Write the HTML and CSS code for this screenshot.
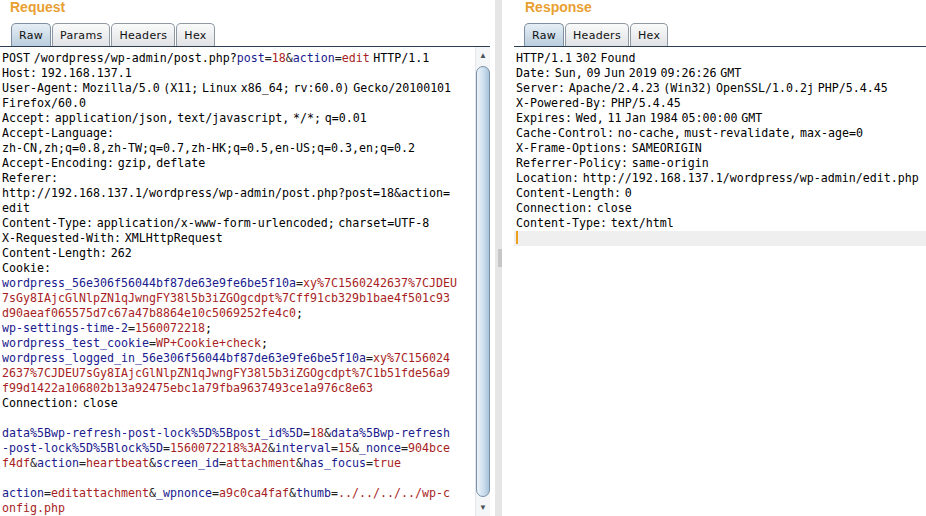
FILE: index.html
```html
<!DOCTYPE html>
<html>
<head>
	<title>Repeater</title>
	<link rel="stylesheet" href="styles.css">
</head>
<body>
	<div class="panes">
		<!-- 请求 -->
		<div class="pane pane-req">
			<div class="pane-title">Request</div>
			<ul class="tabs">
				<li class="tab active">Raw</li>
				<li class="tab">Params</li>
				<li class="tab">Headers</li>
				<li class="tab">Hex</li>
			</ul>
			<div class="editor">
				<div class="text">
					<div class="ln">POST /wordpress/wp-admin/post.php?<span class="k">post</span><span class="d">=</span><span class="v">18</span><span class="d">&amp;</span><span class="k">action</span><span class="d">=</span><span class="v">edit</span> HTTP/1.1</div>
					<div class="ln">Host: 192.168.137.1</div>
					<div class="ln">User-Agent: Mozilla/5.0 (X11; Linux x86_64; rv:60.0) Gecko/20100101</div>
					<div class="ln">Firefox/60.0</div>
					<div class="ln">Accept: application/json, text/javascript, */*; q=0.01</div>
					<div class="ln">Accept-Language:</div>
					<div class="ln">zh-CN,zh;q=0.8,zh-TW;q=0.7,zh-HK;q=0.5,en-US;q=0.3,en;q=0.2</div>
					<div class="ln">Accept-Encoding: gzip, deflate</div>
					<div class="ln">Referer:</div>
					<div class="ln">http://192.168.137.1/wordpress/wp-admin/post.php?post=18&amp;action=</div>
					<div class="ln">edit</div>
					<div class="ln">Content-Type: application/x-www-form-urlencoded; charset=UTF-8</div>
					<div class="ln">X-Requested-With: XMLHttpRequest</div>
					<div class="ln">Content-Length: 262</div>
					<div class="ln">Cookie:</div>
					<div class="ln"><span class="k">wordpress_56e306f56044bf87de63e9fe6be5f10a</span><span class="d">=</span><span class="v">xy%7C1560242637%7CJDEU</span></div>
					<div class="ln"><span class="v">7sGy8IAjcGlNlpZN1qJwngFY38l5b3iZGOgcdpt%7Cff91cb329b1bae4f501c93</span></div>
					<div class="ln"><span class="v">d90aeaf065575d7c67a47b8864e10c5069252fe4c0</span>;</div>
					<div class="ln"><span class="k">wp-settings-time-2</span><span class="d">=</span><span class="v">1560072218</span>;</div>
					<div class="ln"><span class="k">wordpress_test_cookie</span><span class="d">=</span><span class="v">WP+Cookie+check</span>;</div>
					<div class="ln"><span class="k">wordpress_logged_in_56e306f56044bf87de63e9fe6be5f10a</span><span class="d">=</span><span class="v">xy%7C156024</span></div>
					<div class="ln"><span class="v">2637%7CJDEU7sGy8IAjcGlNlpZN1qJwngFY38l5b3iZGOgcdpt%7C1b51fde56a9</span></div>
					<div class="ln"><span class="v">f99d1422a106802b13a92475ebc1a79fba9637493ce1a976c8e63</span></div>
					<div class="ln">Connection: close</div>
					<div class="ln">&nbsp;</div>
					<div class="ln"><span class="k">data%5Bwp-refresh-post-lock%5D%5Bpost_id%5D</span><span class="d">=</span><span class="v">18</span><span class="d">&amp;</span><span class="k">data%5Bwp-refresh</span></div>
					<div class="ln"><span class="k">-post-lock%5D%5Block%5D</span><span class="d">=</span><span class="v">1560072218%3A2</span><span class="d">&amp;</span><span class="k">interval</span><span class="d">=</span><span class="v">15</span><span class="d">&amp;</span><span class="k">_nonce</span><span class="d">=</span><span class="v">904bce</span></div>
					<div class="ln"><span class="v">f4df</span><span class="d">&amp;</span><span class="k">action</span><span class="d">=</span><span class="v">heartbeat</span><span class="d">&amp;</span><span class="k">screen_id</span><span class="d">=</span><span class="v">attachment</span><span class="d">&amp;</span><span class="k">has_focus</span><span class="d">=</span><span class="v">true</span></div>
					<div class="ln">&nbsp;</div>
					<div class="ln"><span class="k">action</span><span class="d">=</span><span class="v">editattachment</span><span class="d">&amp;</span><span class="k">_wpnonce</span><span class="d">=</span><span class="v">a9c0ca4faf</span><span class="d">&amp;</span><span class="k">thumb</span><span class="d">=</span><span class="v">../../../../wp-c</span></div>
					<div class="ln"><span class="v">onfig.php</span></div>
				</div>
				<div class="scrollbar">
					<div class="sb-btn">&#9650;</div>
					<div class="sb-track"><div class="sb-thumb"></div></div>
					<div class="sb-btn">&#9660;</div>
				</div>
			</div>
		</div>

		<!-- 分隔条 -->
		<div class="splitter"><div class="grip"></div></div>

		<!-- 响应 -->
		<div class="pane pane-res">
			<div class="pane-title">Response</div>
			<ul class="tabs">
				<li class="tab active">Raw</li>
				<li class="tab">Headers</li>
				<li class="tab">Hex</li>
			</ul>
			<div class="editor">
				<div class="text">
					<div class="ln">HTTP/1.1 302 Found</div>
					<div class="ln">Date: Sun, 09 Jun 2019 09:26:26 GMT</div>
					<div class="ln">Server: Apache/2.4.23 (Win32) OpenSSL/1.0.2j PHP/5.4.45</div>
					<div class="ln">X-Powered-By: PHP/5.4.45</div>
					<div class="ln">Expires: Wed, 11 Jan 1984 05:00:00 GMT</div>
					<div class="ln">Cache-Control: no-cache, must-revalidate, max-age=0</div>
					<div class="ln">X-Frame-Options: SAMEORIGIN</div>
					<div class="ln">Referrer-Policy: same-origin</div>
					<div class="ln">Location: http://192.168.137.1/wordpress/wp-admin/edit.php</div>
					<div class="ln">Content-Length: 0</div>
					<div class="ln">Connection: close</div>
					<div class="ln">Content-Type: text/html</div>
					<div class="ln current"><span class="caret"></span></div>
				</div>
			</div>
		</div>
	</div>
</body>
</html>
```
FILE: styles.css
```css
*{
	margin: 0;
	padding: 0;
	box-sizing: border-box;
}
html,body{
	height: 100%;
	overflow: hidden;
	background: #fff;
}
.panes{
	display: flex;
	height: 516px;
}
.pane{
	display: flex;
	flex-direction: column;
	height: 100%;
}
.pane-req{
	width: 490px;
}
.pane-res{
	flex: 1;
	margin-left: 12px;
}

/* 标题 */
.pane-title{
	height: 23px;
	padding-left: 10px;
	font-family: "Liberation Sans", Arial, sans-serif;
	font-weight: bold;
	font-size: 14px;
	line-height: 14px;
	color: #e8a032;
}
.pane-res .pane-title{
	padding-left: 11px;
}

/* 标签页 */
.tabs{
	display: flex;
	padding-left: 11px;
	height: 24px;
	border-bottom: 1px solid #2c3e52;
	list-style: none;
}
.pane-res .tabs{
	padding-left: 10px;
}
.tab{
	height: 23px;
	margin-right: 1px;
	padding: 0 7px;
	border: 1px solid #8e99a4;
	border-bottom: none;
	border-radius: 5px 5px 0 0;
	background: linear-gradient(#fafafa, #e0e2e5);
	font-family: "DejaVu Sans", Verdana, sans-serif;
	font-size: 11px;
	letter-spacing: 0.3px;
	line-height: 24px;
	color: #111;
}
.tab.active{
	background: linear-gradient(#e6eef5, #b9cddd);
	border-color: #7d8fa0;
}

/* 文本区 */
.editor{
	flex: 1;
	display: flex;
	min-height: 0;
	padding-top: 4px;
}
.text{
	flex: 1;
	padding-left: 2px;
	font-family: "DejaVu Sans Mono", "Liberation Mono", monospace;
	font-size: 11.63px;
	line-height: 15px;
	word-spacing: -3.3px;
	color: #000;
	overflow: hidden;
}
.ln{
	height: 15px;
	white-space: pre;
}
.k{
	color: #1a1a8e;
}
.v{
	color: #a81e24;
}
.d{
	color: #222;
}
.ln.current{
	margin-left: -2px;
	padding-left: 2px;
	background: #efefef;
}
.caret{
	display: inline-block;
	width: 2px;
	height: 13px;
	vertical-align: -2px;
	background: #f0a020;
}

/* 滚动条 */
.scrollbar{
	display: flex;
	flex-direction: column;
	width: 15px;
	margin-top: -4px;
	border-left: 1px solid #e4e8ec;
	background: #f4f6f8;
}
.sb-btn{
	height: 17px;
	text-align: center;
	font-size: 8px;
	line-height: 17px;
	color: #4a5058;
}
.sb-track{
	flex: 1;
	padding: 2px 0;
}
.sb-thumb{
	height: 100%;
	border: 1px solid #7890a8;
	border-radius: 7px;
	background: linear-gradient(90deg, #eef4fa, #c8dced 60%, #a9c3da);
}

/* 分隔条 */
.splitter{
	width: 12px;
	display: flex;
	align-items: center;
	background: linear-gradient(90deg, #fff 0 5px, #e6e6e6 5px 13px, #fff 13px);
}
.grip{
	width: 4px;
	height: 18px;
	margin-left: 8px;
	background: #c6c6c6;
}
```
